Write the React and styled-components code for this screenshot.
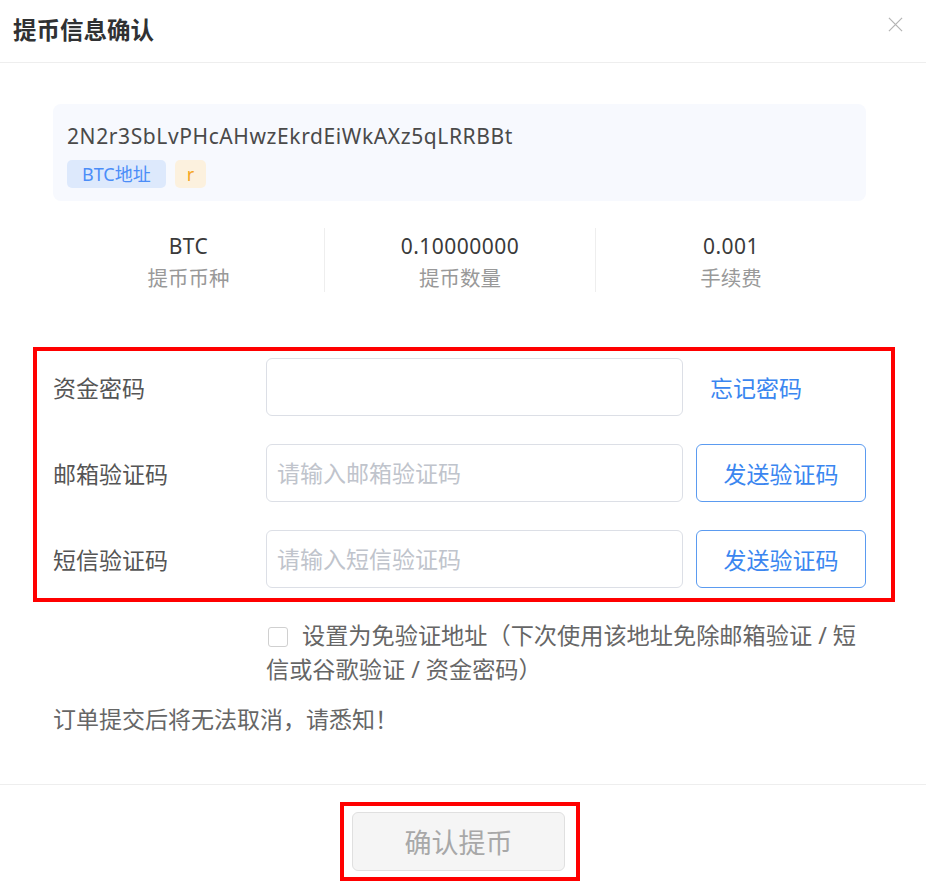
import React from 'react';
import styled, { createGlobalStyle } from 'styled-components';

const GlobalStyle = createGlobalStyle`
    body {
        margin: 0;
        background: #fff;
        font-family: "Noto Sans", "Noto Sans CJK SC", sans-serif;
    }
`

const stats = [
    { value: 'BTC', label: '提币币种' },
    { value: '0.10000000', label: '提币数量' },
    { value: '0.001', label: '手续费' },
]

const fields = [
    { label: '资金密码', placeholder: '', action: 'link', text: '忘记密码' },
    { label: '邮箱验证码', placeholder: '请输入邮箱验证码', action: 'button', text: '发送验证码' },
    { label: '短信验证码', placeholder: '请输入短信验证码', action: 'button', text: '发送验证码' },
]

function App() {
    return (
        <Dialog>
            <GlobalStyle />
            <Header>
                <Title>提币信息确认</Title>
                <Close viewBox="0 0 16 16">
                    <path d="M1 1 L15 15 M15 1 L1 15" />
                </Close>
            </Header>
            <Body>
                <AddressCard>
                    <Address>2N2r3SbLvPHcAHwzEkrdEiWkAXz5qLRRBBt</Address>
                    <Tags>
                        <Tag kind="blue">BTC地址</Tag>
                        <Tag kind="orange">r</Tag>
                    </Tags>
                </AddressCard>
                <Stats>
                    {stats.map((s) => (
                        <Stat key={s.label}>
                            <StatValue>{s.value}</StatValue>
                            <StatLabel>{s.label}</StatLabel>
                        </Stat>
                    ))}
                </Stats>
                <Highlight>
                    <Form>
                        {fields.map((f) => (
                            <React.Fragment key={f.label}>
                                <Label>{f.label}</Label>
                                <Input placeholder={f.placeholder} />
                                {f.action === 'link'
                                    ? <Link>{f.text}</Link>
                                    : <SendButton>{f.text}</SendButton>}
                            </React.Fragment>
                        ))}
                    </Form>
                </Highlight>
                <CheckRow>
                    <Check />
                    设置为免验证地址（下次使用该地址免除邮箱验证 / 短信或谷歌验证 / 资金密码）
                </CheckRow>
                <Notice>订单提交后将无法取消，请悉知！</Notice>
            </Body>
            <Footer>
                <FooterHighlight>
                    <Submit>确认提币</Submit>
                </FooterHighlight>
            </Footer>
        </Dialog>
    )
}

const Dialog = styled.div`
    width: 926px;
    height: 894px;
    background: #fff;
`
const Header = styled.div`
    height: 62px;
    padding: 0 23px 0 13px;
    display: flex;
    align-items: center;
    justify-content: space-between;
    border-bottom: 1px solid #eeeeee;
`
const Title = styled.h2`
    margin: 0;
    font-size: 23.5px;
    font-weight: 700;
    color: #303133;
    margin-top: -4px;
`
const Close = styled.svg`
    width: 15px;
    height: 15px;
    margin-top: -14px;
    stroke: #b4b4b4;
    stroke-width: 1.3;
    fill: none;
`
const Body = styled.div`
    padding: 41px 60px 0 53px;
`
const AddressCard = styled.div`
    background: #f7f9fe;
    border-radius: 8px;
    padding: 18px 14px 13px;
`
const Address = styled.div`
    font-size: 21px;
    line-height: 28px;
    letter-spacing: 0.6px;
    color: #4a4a4a;
`
const Tags = styled.div`
    display: flex;
    gap: 9px;
    margin-top: 10px;
`
const Tag = styled.span`
    height: 28px;
    line-height: 28px;
    padding: 0 ${(p) => (p.kind === 'blue' ? '15px' : '12px')};
    border-radius: 5px;
    font-size: 18px;
    background: ${(p) => (p.kind === 'blue' ? '#dde9fc' : '#fcf1de')};
    color: ${(p) => (p.kind === 'blue' ? '#4b8df8' : '#f5a623')};
`
const Stats = styled.div`
    display: grid;
    grid-template-columns: repeat(3, 1fr);
    margin-top: 27px;
`
const Stat = styled.div`
    height: 64px;
    text-align: center;
    & + & {
        border-left: 1px solid #eeeeee;
    }
`
const StatValue = styled.div`
    font-size: 21px;
    line-height: 36px;
    letter-spacing: 0.5px;
    color: #3a3a3a;
`
const StatLabel = styled.div`
    font-size: 20.5px;
    line-height: 28px;
    color: #999;
`
const Highlight = styled.div`
    margin: 55px -29px 0 -20px;
    border: 4px solid #ff0000;
    padding: 7px 25px 10px 16px;
`
const Form = styled.div`
    display: grid;
    grid-template-columns: 200px 417px 1fr;
    column-gap: 13px;
    row-gap: 28px;
    align-items: center;
`
const Label = styled.div`
    font-size: 23px;
    color: #555;
`
const Input = styled.input`
    box-sizing: border-box;
    height: 58px;
    width: 100%;
    border: 1px solid #dcdfe6;
    border-radius: 6px;
    padding: 0 10px;
    font-family: inherit;
    font-size: 23px;
    color: #333;
    outline: none;
    &::placeholder {
        color: #c0c4cc;
    }
`
const Link = styled.a`
    padding-left: 14px;
    font-size: 23px;
    color: #3a86f0;
    cursor: pointer;
`
const SendButton = styled.button`
    box-sizing: border-box;
    height: 58px;
    width: 100%;
    background: #fff;
    border: 1.5px solid #5b9bf0;
    border-radius: 6px;
    font-family: inherit;
    font-size: 23px;
    color: #3a86f0;
    cursor: pointer;
`
const CheckRow = styled.div`
    margin-top: 16px;
    padding-left: 213px;
    font-size: 23.2px;
    line-height: 34px;
    color: #666;
`
const Check = styled.span`
    display: inline-block;
    box-sizing: border-box;
    width: 20px;
    height: 20px;
    margin: 0 14px 0 2px;
    vertical-align: -3px;
    border: 1px solid #d0d0d0;
    border-radius: 3px;
`
const Notice = styled.div`
    margin-top: 16px;
    font-size: 23px;
    line-height: 34px;
    color: #666;
`
const Footer = styled.div`
    margin-top: 48px;
    border-top: 1px solid #eeeeee;
    padding-top: 17px;
    display: flex;
    justify-content: center;
`
const FooterHighlight = styled.div`
    border: 4px solid #ff0000;
    padding: 6px 11px 6px 8px;
    margin-right: 6px;
`
const Submit = styled.button`
    box-sizing: border-box;
    width: 213px;
    height: 59px;
    background: #f5f5f5;
    border: 1px solid #e0e0e0;
    border-radius: 6px;
    font-family: inherit;
    font-size: 27px;
    color: #a8a8a8;
`

export default App
